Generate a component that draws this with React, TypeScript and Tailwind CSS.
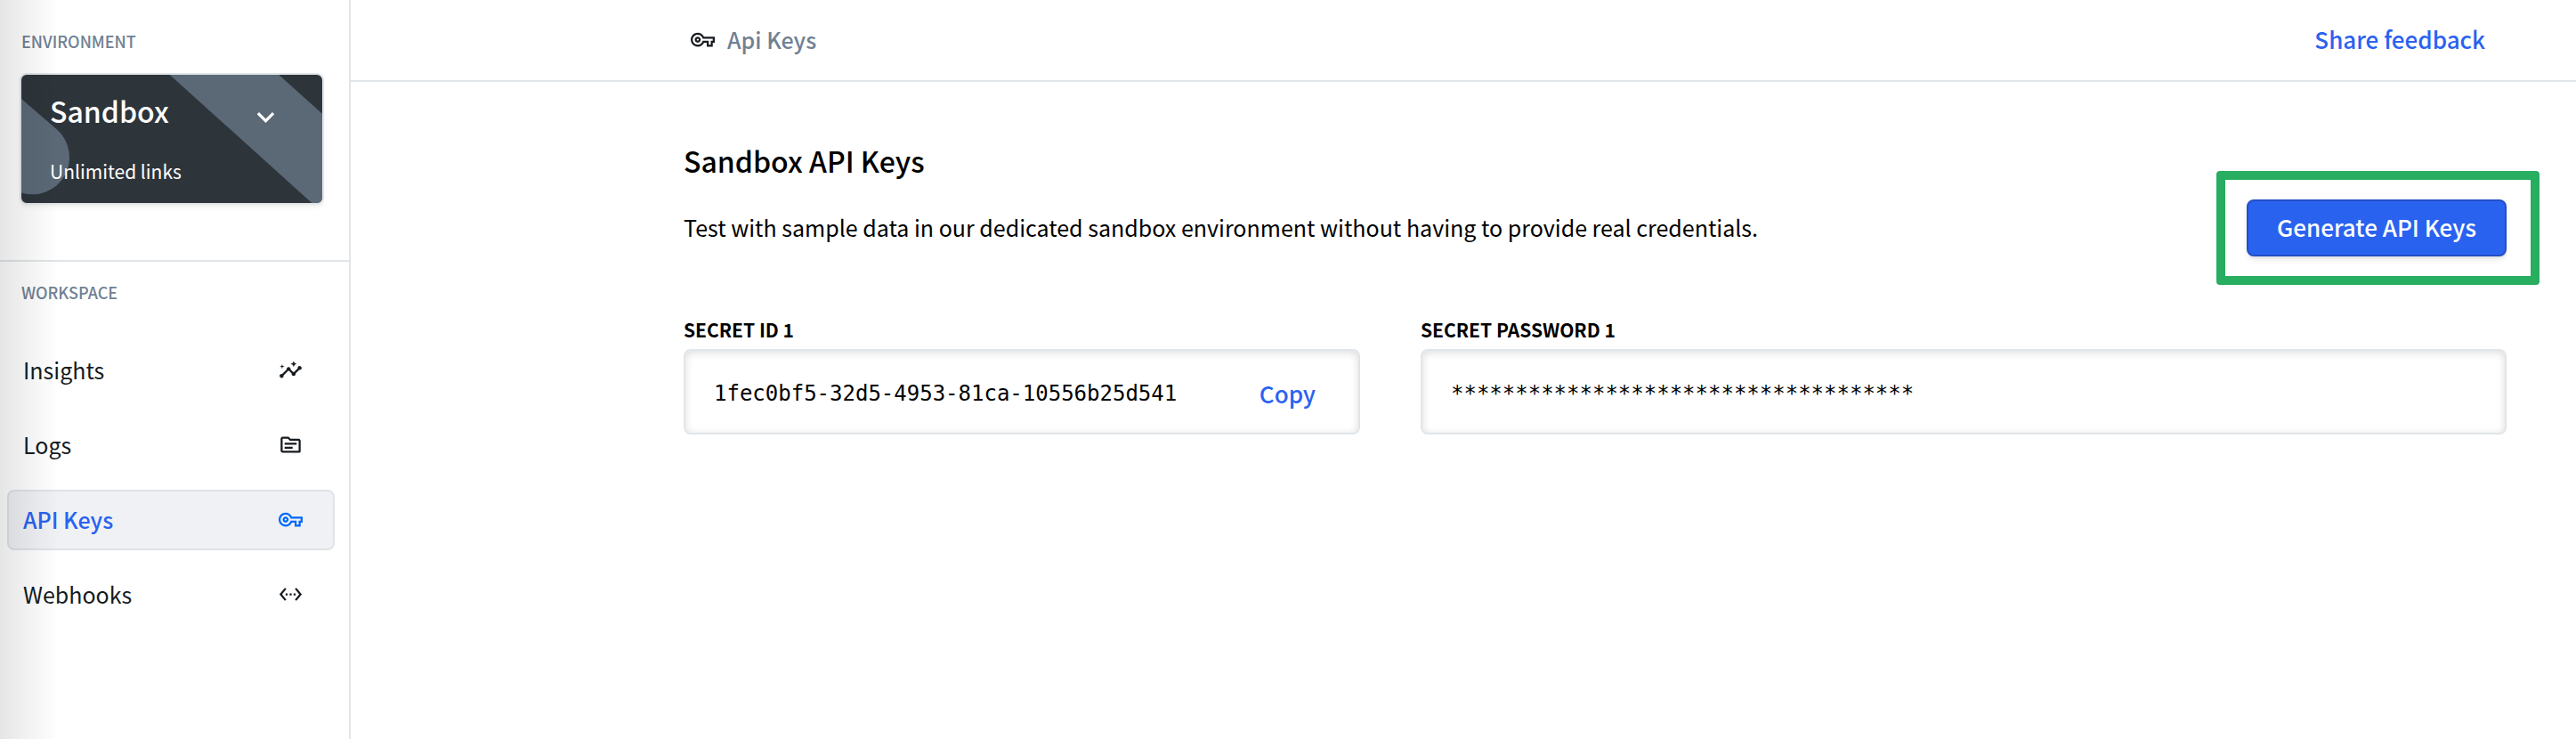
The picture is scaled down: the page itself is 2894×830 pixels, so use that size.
import type { IconType } from "react-icons";
import {
    MdExpandMore,
    MdInsights,
    MdOutlineTopic,
    MdOutlineVpnKey,
    MdSettingsEthernet,
} from "react-icons/md";
import clsx from "clsx";

type NavItem = { name: string; icon: IconType; active?: boolean };

const NAV_ITEMS: NavItem[] = [
    { name: "Insights", icon: MdInsights },
    { name: "Logs", icon: MdOutlineTopic },
    { name: "API Keys", icon: MdOutlineVpnKey, active: true },
    { name: "Webhooks", icon: MdSettingsEthernet },
];

const SECRET_ID = "1fec0bf5-32d5-4953-81ca-10556b25d541";
const SECRET_MASK = "*".repeat(36);

const EnvironmentCard = () => {
    return (
        <button
            type="button"
            className="relative flex h-[148px] w-full flex-col justify-between overflow-hidden rounded-lg border-2 border-[#e1e5e9] bg-[#2d343a] px-8 pt-4 pb-5 text-left text-white shadow-md shadow-black/5"
        >
            {/* Diagonal stripes */}
            <svg
                viewBox="0 0 338 144"
                preserveAspectRatio="none"
                className="absolute inset-0 size-full fill-[#5b6876]"
                aria-hidden="true"
            >
                <path d="M166.7 0H289.3L338 43.7V144H326.3Z" />
                <path d="M0 27L40.3 61.8A41.6 41.6 0 0 1 0 132.4Z" />
            </svg>
            <span className="relative flex items-start justify-between">
                <span className="text-[32px] leading-12 font-medium">Sandbox</span>
                <MdExpandMore className="mt-3 mr-3 size-[39px]" />
            </span>
            <span className="relative text-[21px] leading-8">Unlimited links</span>
        </button>
    );
};

const Sidebar = () => {
    return (
        <aside className="w-[394px] shrink-0 border-r-2 border-[#e1e5e9]">
            <section className="h-[294px] border-b-2 border-[#e1e5e9] px-[22px] pt-8">
                <h2 className="mb-[22px] pl-0.5 text-[18px] leading-7 font-medium text-[#708194]">ENVIRONMENT</h2>
                <div className="pr-1.5">
                    <EnvironmentCard />
                </div>
            </section>

            <section className="pt-5">
                <h2 className="mb-10 pl-6 text-[18px] leading-7 font-medium text-[#708194]">WORKSPACE</h2>
                <nav className="flex flex-col gap-4 pr-4 pl-2">
                    {NAV_ITEMS.map((item) => (
                        <a
                            key={item.name}
                            href="#"
                            className={clsx(
                                "flex h-[68px] items-center justify-between rounded-lg border-2 pr-[34px] pb-0.5 pl-4 text-[25px] leading-8",
                                item.active
                                    ? "border-[#dfe3e7] bg-[#eff1f4] font-medium text-[#2a62f0]"
                                    : "border-transparent text-[#161b1f]"
                            )}
                        >
                            {item.name}
                            <item.icon className={clsx("size-[27px]", item.active && "text-[#0068ff]")} />
                        </a>
                    ))}
                </nav>
            </section>
        </aside>
    );
};

const Header = () => {
    return (
        <header className="flex h-[92px] items-center justify-between border-b-2 border-[#e1e5e9] pr-[102px] pb-0.5 pl-[382px] leading-8 font-medium">
            <div className="flex items-center gap-3.5 text-[25px]">
                <MdOutlineVpnKey className="size-[27px] text-[#161b1f]" />
                <span className="text-[#708194]">Api Keys</span>
            </div>
            <a href="#" className="text-[26px] text-[#2a62f0]">
                Share feedback
            </a>
        </header>
    );
};

const FIELD_CLASSES =
    "flex h-24 items-center rounded-lg border-2 border-[#e1e5e9] px-8 pt-1 shadow-[inset_0_2px_10px_rgba(0,0,0,0.14)]";
const MONO_CLASSES =
    "min-w-0 flex-1 bg-transparent font-['DejaVu_Sans_Mono',monospace] text-[24px] leading-8 outline-none";

export default function App() {
    return (
        <div className="relative flex min-h-screen bg-white font-['Noto_Sans_CJK_SC','Noto_Sans',sans-serif] text-black">
            <Sidebar />

            <div className="min-w-0 flex-1">
                <Header />

                <main className="pt-[66px] pr-[78px] pl-[374px]">
                    <h1 className="text-[32px] leading-11 font-medium">Sandbox API Keys</h1>

                    <div className="mt-[22px] flex items-center justify-between">
                        <p className="pb-0.5 text-[25px] leading-9">
                            Test with sample data in our dedicated sandbox environment without having to provide real
                            credentials.
                        </p>
                        <div className="relative">
                            <button
                                type="button"
                                className="flex h-16 w-[292px] items-center justify-center rounded-lg border-2 border-[#234fc4] bg-[#2a62f0] pb-0.5 text-[26px] leading-8 font-medium text-white shadow-md shadow-black/10"
                            >
                                Generate API Keys
                            </button>
                            {/* Callout frame around the button */}
                            <div className="pointer-events-none absolute -top-8 -right-[37px] -bottom-8 -left-[34px] rounded border-10 border-[#28ae60]" />
                        </div>
                    </div>

                    <div className="mt-[66px] grid grid-cols-[760px_1fr] gap-x-[68px]">
                        <div>
                            <label htmlFor="secret-id" className="mb-1.5 block text-[21px] leading-8 font-semibold">
                                SECRET ID 1
                            </label>
                            <div className={FIELD_CLASSES}>
                                <input id="secret-id" readOnly defaultValue={SECRET_ID} className={MONO_CLASSES} />
                                <button
                                    type="button"
                                    className="pr-4 text-[26px] leading-8 font-medium text-[#2a62f0]"
                                >
                                    Copy
                                </button>
                            </div>
                        </div>
                        <div>
                            <label
                                htmlFor="secret-password"
                                className="mb-1.5 block text-[21px] leading-8 font-semibold"
                            >
                                SECRET PASSWORD 1
                            </label>
                            <div className={FIELD_CLASSES}>
                                <input
                                    id="secret-password"
                                    readOnly
                                    defaultValue={SECRET_MASK}
                                    className={MONO_CLASSES}
                                />
                            </div>
                        </div>
                    </div>
                </main>
            </div>

            {/* Shadow along the left edge */}
            <div className="pointer-events-none absolute inset-y-0 left-0 w-[66px] bg-linear-to-r from-black/10 via-black/5 to-transparent" />
        </div>
    );
}
